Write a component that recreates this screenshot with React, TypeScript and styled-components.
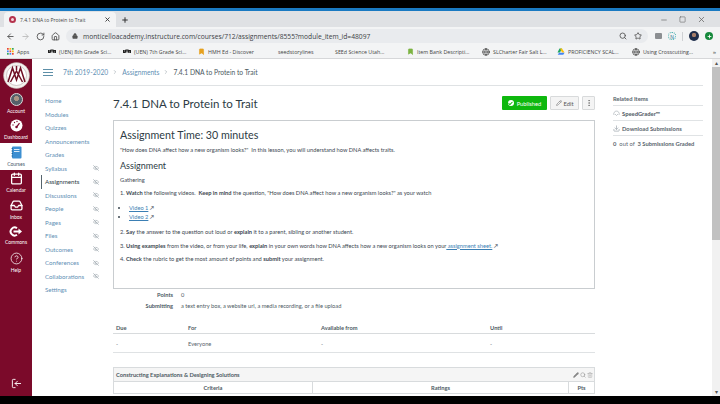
import React from "react";
import styled, { createGlobalStyle } from "styled-components";
import {
  ArrowLeft,
  ArrowRight,
  Bookmark,
  Calendar,
  Check,
  ChevronRight,
  CircleHelp,
  Download,
  EllipsisVertical,
  EyeOff,
  Globe,
  Home,
  Inbox,
  LogIn,
  Lock,
  Minus,
  Pencil,
  Plus,
  RotateCw,
  Search,
  Square,
  Star,
  Trash2,
  X,
} from "lucide-react";

const GlobalStyle = createGlobalStyle`
  html, body { margin: 0; padding: 0; background: #000; }
  * { box-sizing: border-box; }
  body { font-family: Lato, "Liberation Sans", sans-serif; color: #2d3b45; }
`;

const navItems = [
  { label: "Home" },
  { label: "Modules" },
  { label: "Quizzes" },
  { label: "Announcements" },
  { label: "Grades" },
  { label: "Syllabus", hidden: true },
  { label: "Assignments", hidden: true, active: true },
  { label: "Discussions", hidden: true },
  { label: "People", hidden: true },
  { label: "Pages", hidden: true },
  { label: "Files", hidden: true },
  { label: "Outcomes", hidden: true },
  { label: "Conferences", hidden: true },
  { label: "Collaborations", hidden: true },
  { label: "Settings" },
];

const bookmarks = [
  { label: "Apps", icon: <AppsIcon />, width: 38 },
  { label: "(UEN) 8th Grade Sci...", icon: <UenMark />, width: 72 },
  { label: "(UEN) 7th Grade Sci...", icon: <UenMark />, width: 72 },
  { label: "HMH Ed - Discover", icon: <Bookmark size={7} fill="#e6a11f" color="#e6a11f" />, width: 77 },
  { label: "seedstorylines", icon: null, width: 54 },
  { label: "SEEd Science Utah...", icon: null, width: 69 },
  { label: "Item Bank Descripti...", icon: <Bookmark size={7} fill="#7cb342" color="#7cb342" />, width: 72 },
  { label: "SLCharter Fair Salt L...", icon: <Globe size={8} color="#333" />, width: 72 },
  { label: "PROFICIENCY SCAL...", icon: <DriveIcon />, width: 72 },
  { label: "Using Crosscutting...", icon: <Globe size={8} color="#333" />, width: 68 },
];

function AppsIcon() {
  const cells = [
    "#ea4335", "#fbbc05", "#34a853",
    "#4285f4", "#ea4335", "#fbbc05",
    "#34a853", "#4285f4", "#ea4335",
  ];
  return (
    <svg width="7" height="7" viewBox="0 0 9 9">
      {cells.map((c, i) => (
        <rect key={i} x={(i % 3) * 3.2} y={Math.floor(i / 3) * 3.2} width="2.2" height="2.2" fill={c} />
      ))}
    </svg>
  );
}

function UenMark() {
  return (
    <svg width="8" height="5" viewBox="0 0 16 10">
      <path d="M1 2v5h3V2M6 7V2h4v5M12 8V3h3v5" fill="none" stroke="#222" strokeWidth="2.4" />
    </svg>
  );
}

function DriveIcon() {
  return (
    <svg width="8" height="7" viewBox="0 0 16 14">
      <path d="M5 1h5l-4 8H1z" fill="#1ea362" />
      <path d="M10 1l5 8h-5L6 1z" fill="#ffc107" />
      <path d="M4 9.5h11L12.5 13.500H1.500z" fill="#4285f4" />
    </svg>
  );
}

function SchoolLogo() {
  return (
    <svg width="27" height="27" viewBox="0 0 54 54">
      <circle cx="27" cy="27" r="26" fill="#f4f1ee" stroke="#b9b1ab" strokeWidth="1" />
      <circle cx="27" cy="27" r="20" fill="#fff" stroke="#8f7d7d" strokeWidth="0.8" />
      <path
        d="M10 40L19 12l8 24 8-24 9 28M15 40l12-22 12 22M27 8v8"
        fill="none"
        stroke="#6f1024"
        strokeWidth="3"
      />
    </svg>
  );
}

function DashboardIcon() {
  return (
    <svg width="13" height="13" viewBox="0 0 26 26">
      <circle cx="13" cy="13" r="12" fill="#fff" />
      <path d="M13 16l6-8" stroke="#7b0a2a" strokeWidth="2.500" />
      <circle cx="13" cy="16" r="2.500" fill="#7b0a2a" />
      <circle cx="6" cy="12" r="1.300" fill="#7b0a2a" />
      <circle cx="9" cy="7" r="1.300" fill="#7b0a2a" />
      <circle cx="14" cy="5" r="1.300" fill="#7b0a2a" />
    </svg>
  );
}

function CoursesIcon() {
  return (
    <svg width="11" height="13" viewBox="0 0 22 26">
      <rect x="2" y="1" width="19" height="24" rx="2" fill="#3d8fd1" />
      <path d="M6 7h11M6 11h11" stroke="#dcebf7" strokeWidth="2" />
      <path d="M1 5h3M1 10h3M1 15h3M1 20h3" stroke="#1d5f95" strokeWidth="1.600" />
    </svg>
  );
}

function CommonsIcon() {
  return (
    <svg width="14" height="11" viewBox="0 0 28 22">
      <path d="M16 4.500A8 8 0 1 0 16 17.500" fill="none" stroke="#fff" strokeWidth="4" />
      <path d="M9 11h13" stroke="#fff" strokeWidth="4" />
      <path d="M19 5l7 6-7 6z" fill="#fff" />
    </svg>
  );
}

function SpeedGraderIcon() {
  return (
    <svg width="7" height="7" viewBox="0 0 14 14">
      <path d="M2 10a5.500 5.500 0 1 1 10 0" fill="none" stroke="#9aa3a9" strokeWidth="1.200" />
      <path d="M4 8l3 3 3-3" fill="none" stroke="#9aa3a9" strokeWidth="1.200" />
    </svg>
  );
}

export default function App() {
  return (
    <Screen>
      <GlobalStyle />
      <TopBlack />
      <BlueLine />
      <TabStrip>
        <Tab>
          <TabFavicon />
          <TabTitle>7.4.1 DNA to Protein to Trait</TabTitle>
          <X size={7} color="#333" strokeWidth={3} />
        </Tab>
        <NewTab>
          <Plus size={8} color="#333" strokeWidth={3} />
        </NewTab>
        <WindowButtons>
          <Minus size={8} color="#666" />
          <Square size={7} color="#666" />
          <X size={9} color="#666" />
        </WindowButtons>
      </TabStrip>
      <Toolbar>
        <ToolIcons>
          <ArrowLeft size={9} color="#555" strokeWidth={2.4} />
          <ArrowRight size={9} color="#bbb" strokeWidth={2.4} />
          <RotateCw size={9} color="#555" strokeWidth={2.4} />
          <Home size={9} color="#555" strokeWidth={2.4} />
        </ToolIcons>
        <Omnibox>
          <Lock size={6} color="#555" fill="#555" />
          <Url>monticelloacademy.instructure.com/courses/712/assignments/8555?module_item_id=48097</Url>
          <OmniIcons>
            <Search size={8} color="#555" strokeWidth={2.6} />
            <Star size={8} color="#555" strokeWidth={2.6} />
          </OmniIcons>
        </Omnibox>
        <Extensions>
          <ExtImage />
          <ExtDots>N</ExtDots>
          <Divider />
          <Avatar />
          <GreenDot>
            <Plus size={5} color="#fff" strokeWidth={4} />
          </GreenDot>
        </Extensions>
      </Toolbar>
      <BookmarkBar>
        {bookmarks.map((b) => (
          <BookmarkItem key={b.label} $width={b.width}>
            {b.icon}
            <BookmarkLabel>{b.label}</BookmarkLabel>
          </BookmarkItem>
        ))}
        <MoreBookmarks>»</MoreBookmarks>
      </BookmarkBar>
      <Viewport>
        <Sidebar>
          <LogoSlot>
            <SchoolLogo />
          </LogoSlot>
          <SideItem>
            <Portrait />
            Account
          </SideItem>
          <SideItem>
            <DashboardIcon />
            Dashboard
          </SideItem>
          <SideItem $active>
            <CoursesIcon />
            Courses
          </SideItem>
          <SideItem>
            <Calendar size={13} color="#fff" strokeWidth={2.4} />
            Calendar
          </SideItem>
          <SideItem>
            <Inbox size={13} color="#fff" strokeWidth={2.4} />
            Inbox
          </SideItem>
          <SideItem>
            <CommonsIcon />
            Commons
          </SideItem>
          <SideItem>
            <CircleHelp size={13} color="#fff" strokeWidth={1.4} />
            Help
          </SideItem>
          <Collapse>
            <LogIn size={11} color="#fff" style={{ transform: "scaleX(-1)" }} />
          </Collapse>
        </Sidebar>
        <Page>
          <CrumbBar>
            <Burger>
              <span />
              <span />
              <span />
            </Burger>
            <CrumbLink>7th 2019-2020</CrumbLink>
            <ChevronRight size={6} color="#8b969e" />
            <CrumbLink>Assignments</CrumbLink>
            <ChevronRight size={6} color="#8b969e" />
            <CrumbCurrent>7.4.1 DNA to Protein to Trait</CrumbCurrent>
          </CrumbBar>
          <Columns>
            <CourseNav>
              {navItems.map((n) => (
                <CourseNavItem key={n.label} $active={n.active}>
                  {n.label}
                  {n.hidden && <EyeOff size={6} color="#8b969e" />}
                </CourseNavItem>
              ))}
            </CourseNav>
            <Main>
              <TitleRow>
                <PageTitle>7.4.1 DNA to Protein to Trait</PageTitle>
                <PublishedButton>
                  <PublishedTick>
                    <Check size={5} color="#0eb80e" strokeWidth={5} />
                  </PublishedTick>
                  Published
                </PublishedButton>
                <EditButton>
                  <Pencil size={6} color="#666" />
                  Edit
                </EditButton>
                <KebabButton>
                  <EllipsisVertical size={8} color="#666" />
                </KebabButton>
              </TitleRow>
              <DescriptionBox>
                <Heading>Assignment Time: 30 minutes</Heading>
                <Para>
                  "How does DNA affect how a new organism looks?"&nbsp; In this lesson, you will understand how DNA
                  affects traits.
                </Para>
                <SubHeading>Assignment</SubHeading>
                <Para>Gathering</Para>
                <Para>
                  1. <b>Watch</b> the following videos.&nbsp; <b>Keep in mind</b> the question, "How does DNA affect
                  how a new organism looks?" as your watch
                </Para>
                <VideoList>
                  <li>
                    <VideoLink>Video 1</VideoLink> ↗
                  </li>
                  <li>
                    <VideoLink>Video 2</VideoLink> ↗
                  </li>
                </VideoList>
                <Para>
                  2. <b>Say</b> the answer to the question out loud or <b>explain</b> it to a parent, sibling or
                  another student.
                </Para>
                <Para>
                  3. <b>Using examples</b> from the video, or from your life, <b>explain</b> in your own words how DNA
                  affects how a new organism looks on your<VideoLink> assignment sheet.</VideoLink> ↗
                </Para>
                <Para>
                  4. <b>Check</b> the rubric to get the most amount of points and <b>submit</b> your assignment.
                </Para>
              </DescriptionBox>
              <FactRow>
                <FactLabel>Points</FactLabel>
                <span>0</span>
              </FactRow>
              <FactRow>
                <FactLabel>Submitting</FactLabel>
                <span>a text entry box, a website url, a media recording, or a file upload</span>
              </FactRow>
              <DueTable>
                <DueHead>
                  <span>Due</span>
                  <span>For</span>
                  <span>Available from</span>
                  <span>Until</span>
                </DueHead>
                <DueBody>
                  <span>-</span>
                  <span>Everyone</span>
                  <span>-</span>
                  <span>-</span>
                </DueBody>
              </DueTable>
              <Rubric>
                <RubricTitle>
                  Constructing Explanations &amp; Designing Solutions
                  <RubricTools>
                    <Pencil size={6} color="#888" fill="#888" />
                    <Search size={6} color="#888" />
                    <Trash2 size={6} color="#aaa" />
                  </RubricTools>
                </RubricTitle>
                <RubricHead>
                  <span>Criteria</span>
                  <span>Ratings</span>
                  <span>Pts</span>
                </RubricHead>
              </Rubric>
            </Main>
            <Aside>
              <AsideTitle>Related Items</AsideTitle>
              <AsideRow>
                <SpeedGraderIcon />
                <b>SpeedGrader™</b>
              </AsideRow>
              <AsideRow>
                <Download size={7} color="#8b969e" />
                Download Submissions
              </AsideRow>
              <AsidePlain>
                <strong>0</strong> out of <strong>3 Submissions Graded</strong>
              </AsidePlain>
            </Aside>
          </Columns>
        </Page>
        <Scrollbar>
          <ScrollArrow>▴</ScrollArrow>
          <ScrollThumb />
          <ScrollArrow>▾</ScrollArrow>
        </Scrollbar>
      </Viewport>
      <BottomBlack />
    </Screen>
  );
}

const Screen = styled.div`
  width: 720px;
  height: 404px;
  overflow: hidden;
  display: flex;
  flex-direction: column;
  background: #fff;
`;

const TopBlack = styled.div`
  height: 8px;
  flex: none;
  background: #000;
`;

const BlueLine = styled.div`
  height: 3px;
  flex: none;
  background: #1a7ac2;
`;

const TabStrip = styled.div`
  height: 16px;
  flex: none;
  display: flex;
  align-items: flex-end;
  padding-left: 4px;
  background: #dfe1e4;
`;

const Tab = styled.div`
  width: 112px;
  height: 15px;
  display: flex;
  align-items: center;
  padding: 0 5px;
  gap: 4px;
  background: #f3f4f5;
  border-radius: 4px 4px 0 0;
`;

const TabFavicon = styled.span`
  width: 7px;
  height: 7px;
  flex: none;
  border-radius: 50%;
  border: 2px solid #b5324c;
  background: #f3d9de;
`;

const TabTitle = styled.span`
  flex: 1;
  font: 5px "Open Sans", "Liberation Sans", sans-serif;
  color: #444;
  white-space: nowrap;
`;

const NewTab = styled.div`
  width: 14px;
  height: 15px;
  margin-left: 2px;
  display: flex;
  align-items: center;
  justify-content: center;
`;

const WindowButtons = styled.div`
  margin-left: auto;
  height: 15px;
  width: 62px;
  display: flex;
  align-items: center;
  justify-content: space-between;
  padding: 0 14px 0 2px;
  margin-right: 0;
`;

const Toolbar = styled.div`
  height: 18px;
  flex: none;
  display: flex;
  align-items: center;
  background: #f3f4f5;
`;

const ToolIcons = styled.div`
  width: 66px;
  flex: none;
  display: flex;
  align-items: center;
  justify-content: space-between;
  padding: 0 6px;
`;

const Omnibox = styled.div`
  width: 582px;
  height: 14px;
  flex: none;
  display: flex;
  align-items: center;
  gap: 5px;
  padding: 0 6px 0 6px;
  border-radius: 7px;
  background: #e9ebee;
`;

const Url = styled.span`
  flex: 1;
  font: 6.700px "Open Sans", "Liberation Sans", sans-serif;
  color: #3b3f44;
  white-space: nowrap;
`;

const OmniIcons = styled.div`
  display: flex;
  align-items: center;
  gap: 7px;
`;

const Extensions = styled.div`
  flex: 1;
  display: flex;
  align-items: center;
  gap: 6px;
  padding-left: 7px;
`;

const ExtImage = styled.span`
  width: 7px;
  height: 6px;
  background: #8c8f92;
  border-radius: 1px;
`;

const ExtDots = styled.span`
  width: 8px;
  height: 8px;
  font: 5px "Liberation Sans", sans-serif;
  line-height: 8px;
  text-align: center;
  color: #1c6f8c;
  border: 1px dotted #36a6a6;
  border-radius: 50%;
`;

const Divider = styled.span`
  width: 1px;
  height: 9px;
  background: #cfd1d4;
`;

const Avatar = styled.span`
  width: 10px;
  height: 10px;
  flex: none;
  border-radius: 50%;
  background: radial-gradient(circle at 50% 40%, #a57c68 0 25%, #1d2c4a 30%);
`;

const GreenDot = styled.span`
  width: 8px;
  height: 8px;
  flex: none;
  display: flex;
  align-items: center;
  justify-content: center;
  border-radius: 50%;
  background: #16893c;
`;

const BookmarkBar = styled.div`
  height: 14px;
  flex: none;
  display: flex;
  align-items: center;
  padding: 0 4px 0 7px;
  gap: 3px;
  background: #f3f4f5;
  border-bottom: 1px solid #d6d7d9;
`;

const BookmarkItem = styled.div<{ $width: number }>`
  width: ${(p) => p.$width}px;
  flex: none;
  display: flex;
  align-items: center;
  justify-content: flex-start;
  gap: 3px;
`;

const BookmarkLabel = styled.span`
  font: 5.300px "Open Sans", "Liberation Sans", sans-serif;
  color: #444;
  white-space: nowrap;
`;

const MoreBookmarks = styled.span`
  margin-left: auto;
  font: 6px "Liberation Sans", sans-serif;
  color: #555;
`;

const Viewport = styled.div`
  flex: 1;
  min-height: 0;
  display: flex;
`;

const Sidebar = styled.nav`
  width: 32px;
  flex: none;
  display: flex;
  flex-direction: column;
  align-items: stretch;
  background: #7b0a2a;
`;

const LogoSlot = styled.div`
  height: 31px;
  flex: none;
  display: flex;
  align-items: center;
  justify-content: center;
  padding-top: 2px;
`;

const SideItem = styled.div<{ $active?: boolean }>`
  height: 26.500px;
  flex: none;
  display: flex;
  flex-direction: column;
  align-items: center;
  justify-content: center;
  gap: 2px;
  font-size: 5px;
  line-height: 6px;
  color: ${(p) => (p.$active ? "#46596a" : "#fff")};
  background: ${(p) => (p.$active ? "#fff" : "transparent")};
`;

const Portrait = styled.span`
  width: 13px;
  height: 13px;
  border-radius: 50%;
  border: 1px solid #ddd;
  background: radial-gradient(circle at 50% 40%, #a99484 0 28%, #55606a 32%);
`;

const Collapse = styled.div`
  margin-top: auto;
  height: 22px;
  display: flex;
  align-items: center;
  justify-content: center;
  padding-bottom: 4px;
`;

const Page = styled.div`
  flex: 1;
  min-width: 0;
  display: flex;
  flex-direction: column;
  padding-left: 9px;
  padding-right: 9px;
`;

const CrumbBar = styled.div`
  height: 27px;
  flex: none;
  display: flex;
  align-items: center;
  gap: 4px;
  padding-left: 2px;
  border-bottom: 1px solid #dfe2e4;
  font-size: 6.700px;
`;

const Burger = styled.div`
  width: 10px;
  margin-right: 6px;
  display: flex;
  flex-direction: column;
  gap: 2px;
  span {
    height: 1px;
    background: #5d8fa8;
  }
`;

const CrumbLink = styled.span`
  color: #5f90b5;
`;

const CrumbCurrent = styled.span`
  color: #4d5a63;
`;

const Columns = styled.div`
  flex: 1;
  min-height: 0;
  display: flex;
`;

const CourseNav = styled.div`
  width: 72px;
  flex: none;
  display: flex;
  flex-direction: column;
  padding-top: 8px;
`;

const CourseNavItem = styled.div<{ $active?: boolean }>`
  height: 13.500px;
  flex: none;
  display: flex;
  align-items: center;
  justify-content: space-between;
  padding: 0 14px 0 3px;
  font-size: 6.200px;
  color: ${(p) => (p.$active ? "#2d3b45" : "#5f90b5")};
  border-left: 1px solid ${(p) => (p.$active ? "#56636c" : "transparent")};
  margin-left: 0;
`;

const Main = styled.div`
  width: 482px;
  flex: none;
  display: flex;
  flex-direction: column;
  font-size: 5.700px;
`;

const TitleRow = styled.div`
  height: 34px;
  flex: none;
  display: flex;
  align-items: center;
  gap: 3px;
  padding-top: 0;
`;

const PageTitle = styled.h1`
  flex: 1;
  margin: 0;
  font-size: 11.500px;
  font-weight: 400;
  color: #2d3b45;
`;

const PublishedButton = styled.div`
  width: 45px;
  height: 14px;
  display: flex;
  align-items: center;
  justify-content: center;
  gap: 3px;
  font-size: 5.800px;
  color: #fff;
  background: #0eb80e;
  border-radius: 1px;
`;

const PublishedTick = styled.span`
  width: 6px;
  height: 6px;
  display: flex;
  align-items: center;
  justify-content: center;
  border-radius: 50%;
  background: #fff;
`;

const EditButton = styled.div`
  width: 29px;
  height: 14px;
  display: flex;
  align-items: center;
  justify-content: center;
  gap: 2px;
  font-size: 5.800px;
  color: #555;
  background: #f4f4f4;
  border: 1px solid #d8dadb;
  border-radius: 1px;
`;

const KebabButton = styled.div`
  width: 13px;
  height: 14px;
  display: flex;
  align-items: center;
  justify-content: center;
  background: #f4f4f4;
  border: 1px solid #d8dadb;
  border-radius: 1px;
`;

const DescriptionBox = styled.div`
  height: 169px;
  flex: none;
  padding: 7px 6px;
  border: 1px solid #c9cdd0;
  color: #3b4750;
`;

const Heading = styled.h2`
  margin: 0 0 5px;
  font-size: 10.700px;
  line-height: 13px;
  font-weight: 400;
  color: #2d3b45;
`;

const SubHeading = styled.h3`
  margin: 0 0 5px;
  font-size: 9px;
  line-height: 11px;
  font-weight: 400;
  color: #2d3b45;
`;

const Para = styled.p`
  margin: 0 0 6.500px;
  line-height: 7px;
  white-space: nowrap;
`;

const VideoList = styled.ul`
  margin: 0 0 6.500px;
  padding-left: 9px;
  line-height: 9.500px;
`;

const VideoLink = styled.span`
  color: #3b7fb4;
  text-decoration: underline;
`;

const FactRow = styled.div`
  height: 11px;
  flex: none;
  display: flex;
  align-items: center;
  gap: 8px;
  color: #4d5a63;
  &:first-of-type {
    margin-top: 7px;
  }
`;

const FactLabel = styled.span`
  width: 60px;
  text-align: right;
  font-weight: 700;
  color: #4d5a63;
`;

const DueTable = styled.div`
  margin-top: 11px;
  flex: none;
`;

const DueRow = styled.div`
  display: grid;
  grid-template-columns: 72px 133px 169px 1fr;
  align-items: center;
`;

const DueHead = styled(DueRow)`
  height: 12px;
  padding-left: 3px;
  border-bottom: 1px solid #d8dbdd;
  color: #4d5a63;
  font-weight: 700;
`;

const DueBody = styled(DueRow)`
  height: 19px;
  padding-left: 3px;
  border-bottom: 1px solid #dfe2e4;
  color: #5a666e;
`;

const Rubric = styled.div`
  margin-top: 14px;
  flex: none;
  border: 1px solid #d8dbdd;
  background: #fff;
`;

const RubricTitle = styled.div`
  height: 13px;
  display: flex;
  align-items: center;
  justify-content: space-between;
  padding: 0 1px 0 2px;
  background: #f5f5f5;
  font-weight: 700;
  color: #4d5a63;
`;

const RubricTools = styled.span`
  display: flex;
  gap: 1px;
`;

const RubricHead = styled.div`
  display: grid;
  grid-template-columns: 198px 1fr 26px;
  height: 12px;
  text-align: center;
  line-height: 11px;
  border-top: 1px solid #d8dbdd;
  color: #4d5a63;
  font-weight: 700;
  span + span {
    border-left: 1px solid #d8dbdd;
  }
`;

const Aside = styled.div`
  width: 90px;
  margin-left: 18px;
  flex: none;
  display: flex;
  flex-direction: column;
  padding-top: 9px;
  font-size: 5.800px;
  color: #5a666e;
`;

const AsideTitle = styled.div`
  height: 11px;
  font-weight: 700;
  border-bottom: 1px solid #e0e3e5;
`;

const AsideRow = styled.div`
  height: 15px;
  display: flex;
  align-items: center;
  gap: 2px;
  border-bottom: 1px solid #e0e3e5;
  font-weight: 700;
`;

const AsidePlain = styled.div`
  height: 15px;
  display: flex;
  align-items: center;
  gap: 1.500px;
  white-space: pre;
`;

const Scrollbar = styled.div`
  width: 8px;
  flex: none;
  margin-left: 0;
  display: flex;
  flex-direction: column;
  align-items: stretch;
  background: #f1f1f1;
`;

const ScrollArrow = styled.div`
  height: 8px;
  flex: none;
  font: 6px/8px "Liberation Sans", sans-serif;
  text-align: center;
  color: #555;
`;

const ScrollThumb = styled.div`
  height: 173px;
  flex: none;
  background: #c1c1c1;
  margin-bottom: auto;
`;

const BottomBlack = styled.div`
  height: 8px;
  flex: none;
  background: #000;
`;
